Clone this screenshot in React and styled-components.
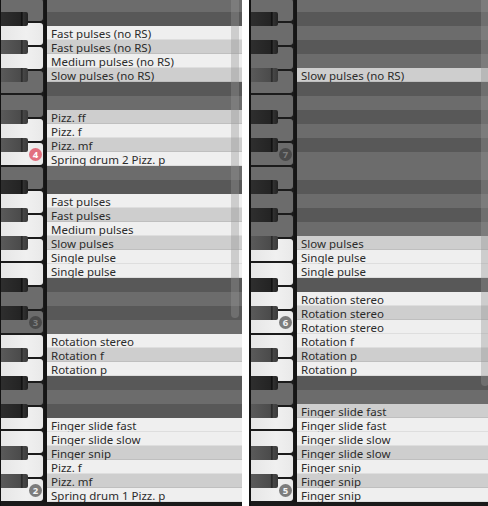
import React from "react";
import styled, { createGlobalStyle, css } from "styled-components";

const ROW = 14;
const BLACK_ROWS = [1, 3, 5, 8, 10];
// note row each white key belongs to: B A G F E D C
const WHITE_ROWS = [0, 2, 4, 6, 7, 9, 11];
// empty rows drawn in the darker shade
const DARK_ROWS = [1, 3, 5, 6, 8, 10];

const GlobalStyle = createGlobalStyle`
  html, body {
    margin: 0;
    padding: 0;
    background: #ffffff;
    overflow: hidden;
  }
  body {
    font-family: "Noto Sans", "Open Sans", sans-serif;
  }
`;

const Page = styled.div`
  display: flex;
  gap: 7px;
  width: 488px;
  height: 506px;
  overflow: hidden;
`;

const Panel = styled.div`
  position: relative;
  display: flex;
  align-items: flex-start;
  flex: 0 0 241px;
  height: 506px;
  background: #1a1a1a;
  border-left: 2px solid #121212;
  overflow: hidden;
  ${(p) =>
    p.$first &&
    css`
      margin-left: -1px;
    `}
`;

const Track = styled.div`
  display: flex;
  flex: 1;
  margin-top: -2px;
`;

const Keyboard = styled.div`
  display: flex;
  flex-direction: column;
  flex: 0 0 43px;
  border-right: 3px solid #151515;
`;

const Octave = styled.div`
  position: relative;
  display: flex;
  flex-direction: column;
  height: ${ROW * 12}px;
  flex: 0 0 auto;
`;

const WhiteKey = styled.div`
  box-sizing: border-box;
  height: 24px;
  border: 1px solid #1b1b1b;
  border-left: none;
  border-radius: 0 4px 4px 0;
  background: ${(p) =>
    p.$lit ? "linear-gradient(to right, #e6e6e6, #f0f0f0 60%, #e9e9e9)" : "#6c6c6c"};
`;

const BlackKey = styled.div`
  position: absolute;
  left: 0;
  top: ${(p) => p.$row * ROW}px;
  width: 27px;
  height: ${ROW}px;
  border-radius: 0 2px 2px 0;
  background: ${(p) =>
    p.$lit
      ? "linear-gradient(to right, #5a5a5a 0%, #4b4b4b 72%, #2c2c2c 74%, #2c2c2c 79%, #484848 81%, #3a3a3a 100%)"
      : "linear-gradient(to right, #2e2e2e 0%, #242424 72%, #121212 74%, #121212 79%, #333333 81%, #222222 100%)"};
`;

const Badge = styled.div`
  position: absolute;
  left: 28px;
  bottom: 5px;
  width: 13px;
  height: 13px;
  border-radius: 50%;
  display: flex;
  align-items: center;
  justify-content: center;
  font-size: 9.5px;
  font-weight: 700;
  line-height: 1;
  ${(p) =>
    p.$accent
      ? css`
          background: #e2707f;
          color: #ffffff;
        `
      : p.$lit
      ? css`
          background: #7c7c7c;
          color: #f4f4f4;
        `
      : css`
          background: #4a4a4a;
          color: #7d7d7d;
        `}
`;

const Rows = styled.div`
  display: flex;
  flex-direction: column;
  flex: 1;
  min-width: 0;
`;

const Row = styled.div`
  box-sizing: border-box;
  height: ${ROW}px;
  flex: 0 0 ${ROW}px;
  padding-left: 4px;
  display: flex;
  align-items: center;
  white-space: nowrap;
  overflow: hidden;
  font-size: 11.5px;
  color: #2b2b2b;
  background: ${(p) =>
    p.$filled ? (p.$black ? "#cecece" : "#efefef") : p.$dark ? "#585858" : "#6c6c6c"};
  box-shadow: ${(p) => (p.$filled ? "inset 0 -1px rgba(0, 0, 0, 0.07)" : "none")};
`;

const Thumb = styled.div`
  position: absolute;
  right: 3px;
  top: -10px;
  width: 8px;
  height: ${(p) => p.$end + 10}px;
  border-radius: 4px;
  background: rgba(150, 150, 150, 0.38);
`;

const leftLabels = {
  2: "Fast pulses (no RS)",
  3: "Fast pulses (no RS)",
  4: "Medium pulses (no RS)",
  5: "Slow pulses (no RS)",
  8: "Pizz. ff",
  9: "Pizz. f",
  10: "Pizz. mf",
  11: "Spring drum 2 Pizz. p",
  14: "Fast pulses",
  15: "Fast pulses",
  16: "Medium pulses",
  17: "Slow pulses",
  18: "Single pulse",
  19: "Single pulse",
  24: "Rotation stereo",
  25: "Rotation f",
  26: "Rotation p",
  30: "Finger slide fast",
  31: "Finger slide slow",
  32: "Finger snip",
  33: "Pizz. f",
  34: "Pizz. mf",
  35: "Spring drum 1 Pizz. p",
};

const rightLabels = {
  5: "Slow pulses (no RS)",
  17: "Slow pulses",
  18: "Single pulse",
  19: "Single pulse",
  21: "Rotation stereo",
  22: "Rotation stereo",
  23: "Rotation stereo",
  24: "Rotation f",
  25: "Rotation p",
  26: "Rotation p",
  29: "Finger slide fast",
  30: "Finger slide fast",
  31: "Finger slide slow",
  32: "Finger slide slow",
  33: "Finger snip",
  34: "Finger snip",
  35: "Finger snip",
};

const SamplePanel = ({ octaves, labels, accent, thumbEnd, first }) => (
  <Panel $first={first}>
    <Track>
      <Keyboard>
        {octaves.map((oct, o) => {
          const base = o * 12;
          const lit = (r) => Boolean(labels[base + r]);
          return (
            <Octave key={oct}>
              {WHITE_ROWS.map((r) => (
                <WhiteKey key={r} $lit={lit(r)} />
              ))}
              {BLACK_ROWS.map((r) => (
                <BlackKey key={r} $row={r} $lit={lit(r)} />
              ))}
              <Badge $accent={oct === accent} $lit={lit(11)}>
                {oct}
              </Badge>
            </Octave>
          );
        })}
      </Keyboard>
      <Rows>
        {Array.from({ length: 36 }, (_, i) => (
          <Row
            key={i}
            $black={BLACK_ROWS.includes(i % 12)}
            $dark={DARK_ROWS.includes(i % 12)}
            $filled={Boolean(labels[i])}
          >
            {labels[i] || ""}
          </Row>
        ))}
      </Rows>
    </Track>
    <Thumb $end={thumbEnd} />
  </Panel>
);

const App = () => {
  return (
    <>
      <GlobalStyle />
      <Page>
        <SamplePanel first octaves={[4, 3, 2]} labels={leftLabels} accent={4} thumbEnd={318} />
        <SamplePanel octaves={[7, 6, 5]} labels={rightLabels} thumbEnd={386} />
      </Page>
    </>
  );
};

export default App;
